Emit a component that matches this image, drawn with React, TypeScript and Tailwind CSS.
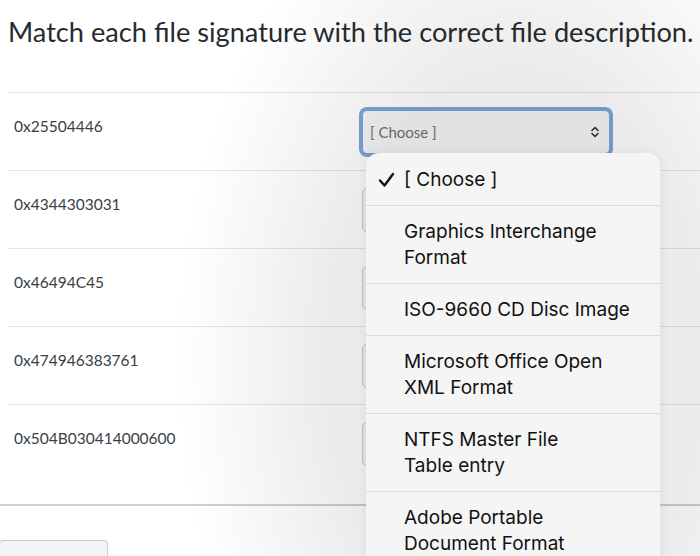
import React from "react";

const rows = ["0x25504446", "0x4344303031", "0x46494C45", "0x474946383761", "0x504B030414000600"];

const options: { lines: string[]; checked?: boolean }[] = [
  { lines: ["[ Choose ]"], checked: true },
  { lines: ["Graphics Interchange", "Format"] },
  { lines: ["ISO-9660 CD Disc Image"] },
  { lines: ["Microsoft Office Open", "XML Format"] },
  { lines: ["NTFS Master File", "Table entry"] },
  { lines: ["Adobe Portable", "Document Format"] },
];

function Chevrons() {
  return (
    <svg width="10" height="12" viewBox="0 0 10 12" fill="none" stroke="#333" strokeWidth="1.6" strokeLinecap="round" strokeLinejoin="round">
      <path d="M2 4.5 L5 1.5 L8 4.5" />
      <path d="M2 7.5 L5 10.5 L8 7.5" />
    </svg>
  );
}

function Check() {
  return (
    <svg width="17" height="16" viewBox="0 0 17 16" fill="none" stroke="#111" strokeWidth="2.4" strokeLinecap="round" strokeLinejoin="round">
      <path d="M2 8.5 L6.5 13.5 L15 2" />
    </svg>
  );
}

export default function App() {
  return (
    <div className="relative w-[700px] h-[556px] overflow-hidden bg-white font-['Lato','Liberation_Sans',sans-serif] text-[#2d3b45]">
      <h1 className="pl-2 pt-[14px] text-[27.2px] leading-[36px] font-normal whitespace-nowrap text-[#262b30]">
        Match each file signature with the correct file description.
      </h1>
      <div className="mt-[42px] ml-2">
        {rows.map((r, i) => (
          <div
            key={r}
            className={`flex border-t border-[#e3e5e7] ${i === rows.length - 1 ? "h-[100px]" : "h-[78px]"}`}
          >
            <div className="w-[354px] pl-[6px] pt-[21px] text-[15.5px] leading-[24px] text-[#3a4046]">{r}</div>
            <div
              className={`mt-[17px] w-[248px] h-[44px] rounded-[5px] border bg-[#f5f5f5] flex items-center justify-between pl-[7px] pr-[9px] ${
                i === 0 ? "border-[#79a6d8] ring-[3px] ring-[#79a6d8]" : "border-[#c7cdd1]"
              }`}
            >
              <span className="text-[15px] text-[#6b7176]">[ Choose ]</span>
              <Chevrons />
            </div>
          </div>
        ))}
      </div>
      <div className="border-t-2 border-[#cdd0d3]" />
      <div className="mt-[34px] -ml-px w-[109px] h-[40px] rounded-[4px] border border-[#c7cdd1] bg-[#f5f5f5]" />

      <div className="pointer-events-none absolute inset-0 bg-[radial-gradient(ellipse_340px_520px_at_515px_360px,rgba(0,0,0,0.08)_55%,rgba(0,0,0,0)_100%)]" />

      <div className="absolute left-[366px] top-[153px] w-[294px] rounded-t-[13px] bg-[#f5f5f5] shadow-[0_0_12px_rgba(0,0,0,0.06)] font-['Inter','Noto_Sans',sans-serif] text-[19px] leading-[26px] text-[#111]">
        {options.map((o, i) => (
          <div
            key={i}
            className={`flex ${i > 0 ? "border-t border-[#dcdcdc] pt-[13px] pb-[12px]" : "pt-[14px] pb-[12px] h-[52px]"}`}
          >
            <div className="w-[38px] flex justify-center items-start pt-[5px] pl-[3px]">{o.checked ? <Check /> : null}</div>
            <div>
              {o.lines.map((l) => (
                <div key={l}>{l}</div>
              ))}
            </div>
          </div>
        ))}
      </div>
    </div>
  );
}
